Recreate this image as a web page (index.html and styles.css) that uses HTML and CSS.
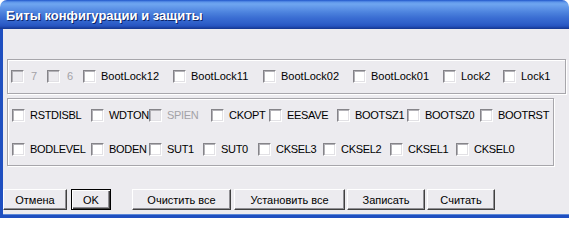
FILE: index.html
```html
<!DOCTYPE html>
<html lang="ru">
<head>
<meta charset="utf-8">
<title>Биты конфигурации и защиты</title>
<link rel="stylesheet" href="styles.css">
</head>
<body>
<div class="window">
  <div class="titlebar"><span class="title">Биты конфигурации и защиты</span></div>
  <div class="client">
    <div class="group group-lock">
      <div class="row row-lock">
        <label class="cb disabled wide"><input type="checkbox" disabled><span>7</span></label>
        <label class="cb disabled wide"><input type="checkbox" disabled><span>6</span></label>
        <label class="cb"><input type="checkbox"><span>BootLock12</span></label>
        <label class="cb"><input type="checkbox"><span>BootLock11</span></label>
        <label class="cb"><input type="checkbox"><span>BootLock02</span></label>
        <label class="cb"><input type="checkbox"><span>BootLock01</span></label>
        <label class="cb"><input type="checkbox"><span>Lock2</span></label>
        <label class="cb"><input type="checkbox"><span>Lock1</span></label>
      </div>
    </div>
    <div class="group group-fuse">
      <div class="row row-high">
        <label class="cb"><input type="checkbox"><span>RSTDISBL</span></label>
        <label class="cb"><input type="checkbox"><span>WDTON</span></label>
        <label class="cb disabled"><input type="checkbox" disabled><span>SPIEN</span></label>
        <label class="cb"><input type="checkbox"><span>CKOPT</span></label>
        <label class="cb"><input type="checkbox"><span>EESAVE</span></label>
        <label class="cb"><input type="checkbox"><span>BOOTSZ1</span></label>
        <label class="cb"><input type="checkbox"><span>BOOTSZ0</span></label>
        <label class="cb"><input type="checkbox"><span>BOOTRST</span></label>
      </div>
      <div class="row row-low">
        <label class="cb"><input type="checkbox"><span>BODLEVEL</span></label>
        <label class="cb"><input type="checkbox"><span>BODEN</span></label>
        <label class="cb"><input type="checkbox"><span>SUT1</span></label>
        <label class="cb"><input type="checkbox"><span>SUT0</span></label>
        <label class="cb"><input type="checkbox"><span>CKSEL3</span></label>
        <label class="cb"><input type="checkbox"><span>CKSEL2</span></label>
        <label class="cb"><input type="checkbox"><span>CKSEL1</span></label>
        <label class="cb"><input type="checkbox"><span>CKSEL0</span></label>
      </div>
    </div>
    <div class="buttons">
      <button class="btn btn-cancel">Отмена</button>
      <button class="btn btn-ok default">OK</button>
      <button class="btn btn-clear">Очистить все</button>
      <button class="btn btn-set">Установить все</button>
      <button class="btn btn-write">Записать</button>
      <button class="btn btn-read">Считать</button>
    </div>
  </div>
</div>
</body>
</html>
```
FILE: styles.css
```css
* { box-sizing: border-box; }

html, body {
  margin: 0;
  padding: 0;
  background: #ffffff;
}

body {
  font-family: "Liberation Sans", Arial, sans-serif;
  font-size: 11px;
  color: #000;
}

.window {
  width: 569px;
  height: 218px;
  display: flex;
  flex-direction: column;
}

.titlebar {
  height: 29px;
  flex: none;
  border-radius: 7px 7px 0 0;
  background: linear-gradient(to bottom,
    #1f55c9 0px,
    #5d95ea 2px,
    #6fa6f0 4px,
    #5f95e8 8px,
    #4a80dc 13px,
    #3a6dd2 18px,
    #2f60ca 23px,
    #2654c0 26px,
    #1a3f9e 28px,
    #153890 29px);
  display: flex;
  align-items: center;
  padding-left: 6px;
  padding-top: 2px;
}

.title {
  color: #fff;
  font-weight: bold;
  font-size: 13px;
  text-shadow: 1px 1px 0 #0a246a;
  white-space: nowrap;
}

.client {
  flex: 1;
  background: #ecebef;
  border-left: 3px solid #1f4fc0;
  border-bottom: 3px solid #1f4fc0;
  box-shadow: inset 0 -1px 0 #5a86d8;
  display: flex;
  flex-direction: column;
  align-items: flex-start;
}

.group {
  border: 1px solid #a7a6ab;
  box-shadow: inset 1px 1px 0 #ffffff, 1px 1px 0 #ffffff;
  margin-left: 4px;
}

.group-lock {
  margin-top: 30px;
  width: 559px;
  height: 35px;
  padding: 10px 0 0 3px;
}

.group-fuse {
  margin-top: 4px;
  width: 547px;
  height: 68px;
  padding: 10px 0 0 4px;
  letter-spacing: -0.3px;
}

.row {
  display: grid;
  height: 13px;
}

.row-lock { grid-template-columns: 36px 36px 90px 90px 90px 90px 60px auto; }
.row-high { grid-template-columns: 79px 58px 62px 58px 68px 70px 73px auto; }
.row-low {
  grid-template-columns: 79px 58px 54px 55px 65px 67px 66px auto;
  margin-top: 21px;
}

.cb {
  display: flex;
  align-items: center;
  gap: 5px;
  height: 13px;
  overflow: hidden;
  white-space: nowrap;
  line-height: 13px;
}

.cb input {
  -webkit-appearance: none;
  appearance: none;
  margin: 0;
  flex: none;
  width: 13px;
  height: 13px;
  background: #ffffff;
  border: 1px solid;
  border-color: #858489 #ffffff #ffffff #858489;
  box-shadow: inset 1px 1px 0 #b3b2b7, inset -1px -1px 0 #e2e1e5;
}

.cb.disabled input {
  background: #ecebef;
}

.cb.disabled span {
  color: #a3a2a7;
}

.cb.wide span {
  padding-left: 2px;
}

.buttons {
  display: flex;
  margin-top: 23px;
  height: 21px;
}

.btn {
  font-family: "Liberation Sans", Arial, sans-serif;
  font-size: 11px;
  color: #000;
  height: 21px;
  padding: 0;
  margin: 0;
  background: #ecebef;
  border: 1px solid;
  border-color: #ffffff #404040 #404040 #ffffff;
  box-shadow: inset -1px -1px 0 #8f8e93;
  line-height: 18px;
  text-align: center;
}

.btn.default {
  border: 1px solid #000;
  box-shadow: inset 1px 1px 0 #ffffff, inset -1px -1px 0 #404040, inset -2px -2px 0 #8f8e93;
}

.btn-cancel { width: 64px; }
.btn-ok { width: 40px; margin-left: 4px; }
.btn-clear { width: 99px; margin-left: 21px; }
.btn-set { width: 111px; margin-left: 3px; }
.btn-write { width: 78px; margin-left: 2px; }
.btn-read { width: 68px; margin-left: 2px; }
```
